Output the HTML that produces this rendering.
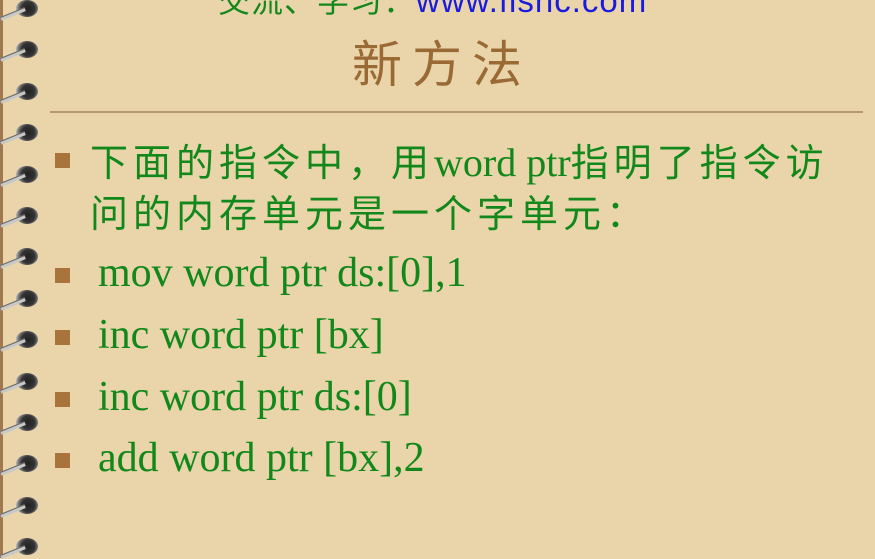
<!DOCTYPE html><html><head><meta charset="utf-8"><style>
body{margin:0;width:875px;height:558px;overflow:hidden;background:#ead5ab;position:relative;font-family:"Liberation Serif","Noto Sans CJK SC",serif}
.strip{position:absolute;left:0;top:0;width:3px;height:558px;background:#a07850}
.ring{position:absolute;left:16px;width:22px;height:17px;border-radius:50%;background:radial-gradient(circle at 55% 50%,#222 0,#333 45%,#888 70%,#ddd 90%)}
.wire{position:absolute;left:0;width:26px;height:3px;background:#c8c8c8;border-top:1px solid #666;transform:rotate(-22deg)}
.t{position:absolute;white-space:nowrap}
.b{position:absolute;left:55px;width:15px;height:15px;background:#a8743c}
.cn{font-family:"Noto Sans CJK SC",sans-serif;color:#13881a;font-size:38px;letter-spacing:5px}
.code{font-family:"Liberation Serif",serif;color:#13881a;font-size:42px;left:98px}
</style></head><body>
<div class="strip"></div>
<div id="rings"></div>
<div class="t" style="left:218px;top:-24px;font-family:'Noto Sans CJK SC',sans-serif;font-size:32px;color:#13881a;letter-spacing:1px">交流、学习：<span style="color:#1a1ae0;font-family:'Liberation Sans',sans-serif;font-size:33px">www.fishc.com</span></div>
<div class="t" style="left:352px;top:25px;font-family:'Noto Sans CJK SC',sans-serif;font-size:50px;color:#9a6a35;letter-spacing:10px">新方法</div>
<div style="position:absolute;left:50px;top:111px;width:813px;height:2px;background:#b89a70"></div>
<div class="b" style="top:153px"></div>
<div class="t cn" style="left:90px;top:132px">下面的指令中，用<span style="font-family:'Liberation Serif',serif;letter-spacing:0;font-size:40px">word ptr</span>指明了指令访</div>
<div class="t cn" style="left:90px;top:183px">问的内存单元是一个字单元：</div>
<div class="b" style="top:268px"></div><div class="t code" style="top:249px">mov word ptr ds:[0],1</div>
<div class="b" style="top:330px"></div><div class="t code" style="top:311px">inc word ptr [bx]</div>
<div class="b" style="top:392px"></div><div class="t code" style="top:373px">inc word ptr ds:[0]</div>
<div class="b" style="top:453px"></div><div class="t code" style="top:434px">add word ptr [bx],2</div>
<script>
var h='';for(var i=0;i<14;i++){var y=0+i*41.4;h+='<div class="ring" style="top:'+y+'px"></div><div class="wire" style="top:'+(y+12)+'px"></div>';}
document.getElementById('rings').innerHTML=h;
</script>
</body></html>
